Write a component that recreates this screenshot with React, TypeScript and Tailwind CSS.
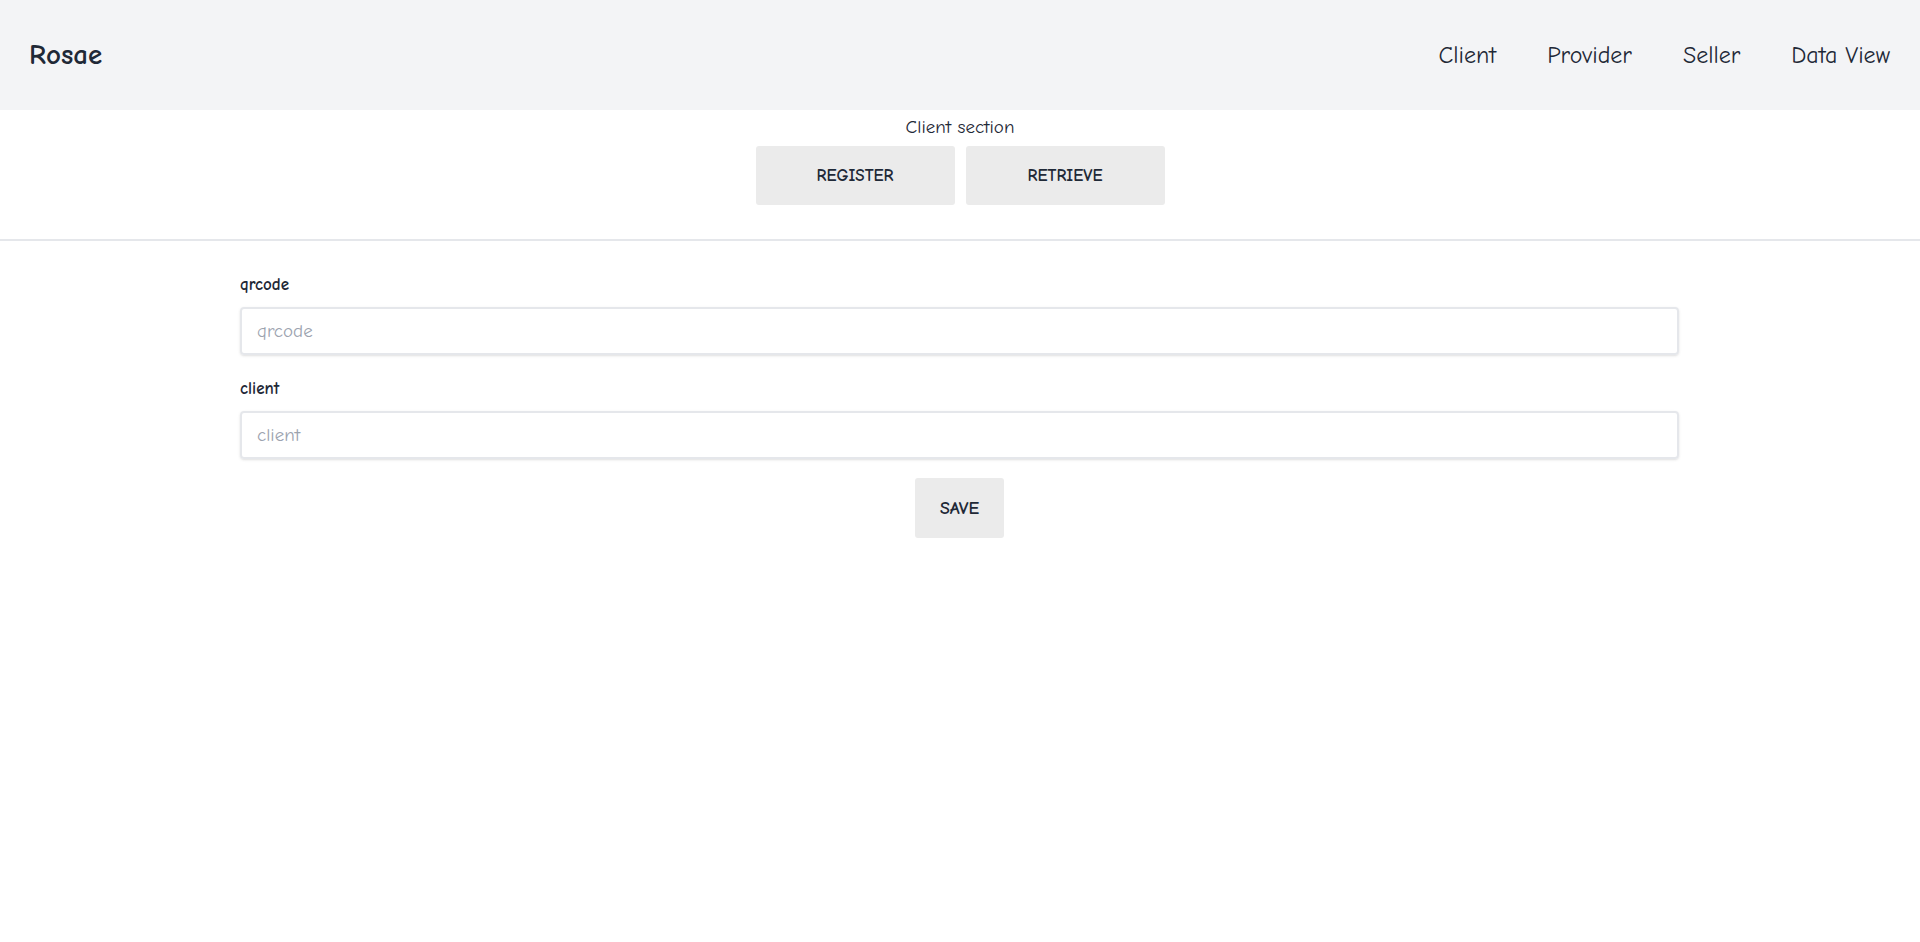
export default function App() {
  const font = { fontFamily: '"Comic Sans MS", "Comic Neue", "Liberation Sans", sans-serif' };
  return (
    <div className="min-h-[942px] bg-white text-[#1f2937]" style={font}>
      <header className="h-[110px] bg-[#f3f4f6] flex items-center justify-between pl-[29px] pr-[30px]">
        <div className="text-[29px] font-bold">Rosae</div>
        <nav className="flex gap-[51px] text-[24px]">
          <a>Client</a>
          <a>Provider</a>
          <a>Seller</a>
          <a>Data View</a>
        </nav>
      </header>
      <section className="flex flex-col items-center border-b-2 border-[#e5e7eb] pb-[34px]">
        <div className="text-[19px] leading-[26px] mt-[4px] mb-[6px]">Client section</div>
        <div className="flex gap-[11px]">
          <button className="w-[199px] h-[59px] bg-[#ebebeb] rounded-[3px] font-bold text-[17px]">REGISTER</button>
          <button className="w-[199px] h-[59px] bg-[#ebebeb] rounded-[3px] font-bold text-[17px]">RETRIEVE</button>
        </div>
      </section>
      <form className="w-[1439px] ml-[240px] pt-[32px] flex flex-col">
        <label className="text-[17px] font-bold leading-[24px]">qrcode</label>
        <input placeholder="qrcode" className="mt-[10px] h-[48px] border-2 border-[#e5e7eb] rounded-[4px] shadow-sm px-[15px] text-[19px] placeholder:text-[#9ca3af] outline-none" />
        <label className="mt-[22px] text-[17px] font-bold leading-[24px]">client</label>
        <input placeholder="client" className="mt-[10px] h-[48px] border-2 border-[#e5e7eb] rounded-[4px] shadow-sm px-[15px] text-[19px] placeholder:text-[#9ca3af] outline-none" />
        <button type="button" className="self-center mt-[19px] w-[89px] h-[60px] bg-[#ebebeb] rounded-[3px] font-bold text-[18px]">SAVE</button>
      </form>
    </div>
  );
}
